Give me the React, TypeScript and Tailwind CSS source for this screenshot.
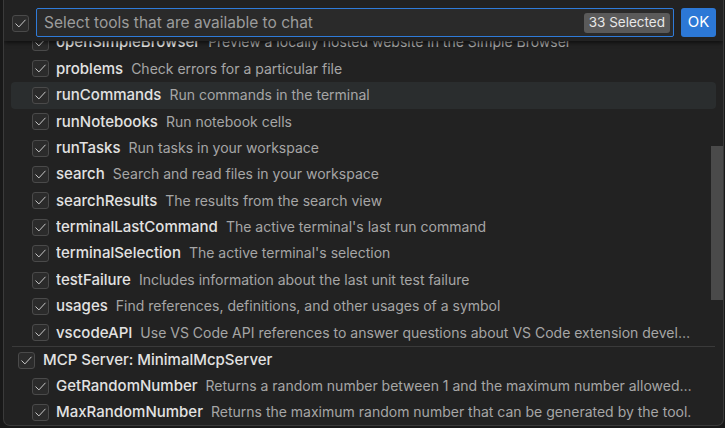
import React from "react";

const font = { fontFamily: "Inter, 'Noto Sans', sans-serif" };

function Check({ size = 17 }: { size?: number }) {
  return (
    <div
      className="flex shrink-0 items-center justify-center rounded-[3px] border border-[#4a4a4a] bg-[#2b2b2b]"
      style={{ width: size, height: size }}
    >
      <svg width="13" height="13" viewBox="0 0 16 16" fill="none">
        <path d="M2.2 8.4 L6 12.2 L13.8 3.8" stroke="#cfcfcf" strokeWidth="1.2" strokeLinecap="round" strokeLinejoin="round" />
      </svg>
    </div>
  );
}

const items: [string, string, boolean?][] = [
  ["openSimpleBrowser", "Preview a locally hosted website in the Simple Browser"],
  ["problems", "Check errors for a particular file"],
  ["runCommands", "Run commands in the terminal", true],
  ["runNotebooks", "Run notebook cells"],
  ["runTasks", "Run tasks in your workspace"],
  ["search", "Search and read files in your workspace"],
  ["searchResults", "The results from the search view"],
  ["terminalLastCommand", "The active terminal's last run command"],
  ["terminalSelection", "The active terminal's selection"],
  ["testFailure", "Includes information about the last unit test failure"],
  ["usages", "Find references, definitions, and other usages of a symbol"],
  ["vscodeAPI", "Use VS Code API references to answer questions about VS Code extension development"],
];

const mcp: [string, string][] = [
  ["GetRandomNumber", "Returns a random number between 1 and the maximum number allowed by the tool"],
  ["MaxRandomNumber", "Returns the maximum random number that can be generated by the tool."],
];

function Row({ label, desc, active }: { label: string; desc: string; active?: boolean }) {
  return (
    <div
      className={`mx-[7px] flex h-[26.4px] items-center gap-[7px] rounded-[4px] pl-[21px] pr-[22px] ${
        active ? "bg-[#2a2d2e]" : ""
      }`}
    >
      <Check />
      <div className="flex min-w-0 items-baseline gap-[8px] overflow-hidden whitespace-nowrap">
        <span className="shrink-0 text-[15px] font-medium text-[#e2e2e2]">{label}</span>
        <span className="min-w-0 truncate text-[14px] text-[#a6a6a6]">{desc}</span>
      </div>
    </div>
  );
}

export default function App() {
  return (
    <div className="flex h-[428px] w-[725px] overflow-hidden bg-[#181818] pl-[3px] pr-[1px]" style={font}>
      <div className="relative flex h-[426px] flex-1 flex-col overflow-hidden rounded-b-[7px] border border-t-0 border-[#3a3a3a] bg-[#222222]">
        <div className="relative z-10 flex h-[41px] shrink-0 items-start gap-[6px] bg-[#222222] pl-[8px] pr-[7px] pt-[8px] shadow-[0_2px_4px_rgba(0,0,0,0.55)]">
          <div className="mt-[7px]">
            <Check size={17} />
          </div>
          <div className="ml-[1px] flex h-[29px] flex-1 items-center rounded-[2px] border border-[#2f7bd9] bg-[#2a2a2a] pl-[7px] pr-[3px]">
            <span className="flex-1 text-[15.5px] text-[#9c9c9c]">Select tools that are available to chat</span>
            <span className="flex h-[20px] items-center rounded-[3px] bg-[#5a5a5a] px-[5px] text-[13.5px] text-[#e8e8e8]">
              33 Selected
            </span>
          </div>
          <button className="ml-[1px] flex h-[29px] w-[35px] items-center justify-center rounded-[3px] bg-[#2c78d6] text-[15px] text-white">
            OK
          </button>
        </div>
        <div className="relative -mt-[11.6px] flex flex-col">
          {items.map(([l, d, a]) => (
            <Row key={l} label={l} desc={d} active={a} />
          ))}
          <div className="mx-[8px] h-[1px] bg-[#3a3a3a]" />
          <div className="mx-[7px] flex h-[26px] items-center gap-[8px] pl-[7px]">
            <Check size={17} />
            <span className="text-[15px] font-medium text-[#e2e2e2]">MCP Server: MinimalMcpServer</span>
          </div>
          {mcp.map(([l, d]) => (
            <Row key={l} label={l} desc={d} />
          ))}
        </div>
        <div className="absolute right-0 top-[146px] h-[154px] w-[12px] bg-[#4a4a4a]" />
      </div>
    </div>
  );
}
